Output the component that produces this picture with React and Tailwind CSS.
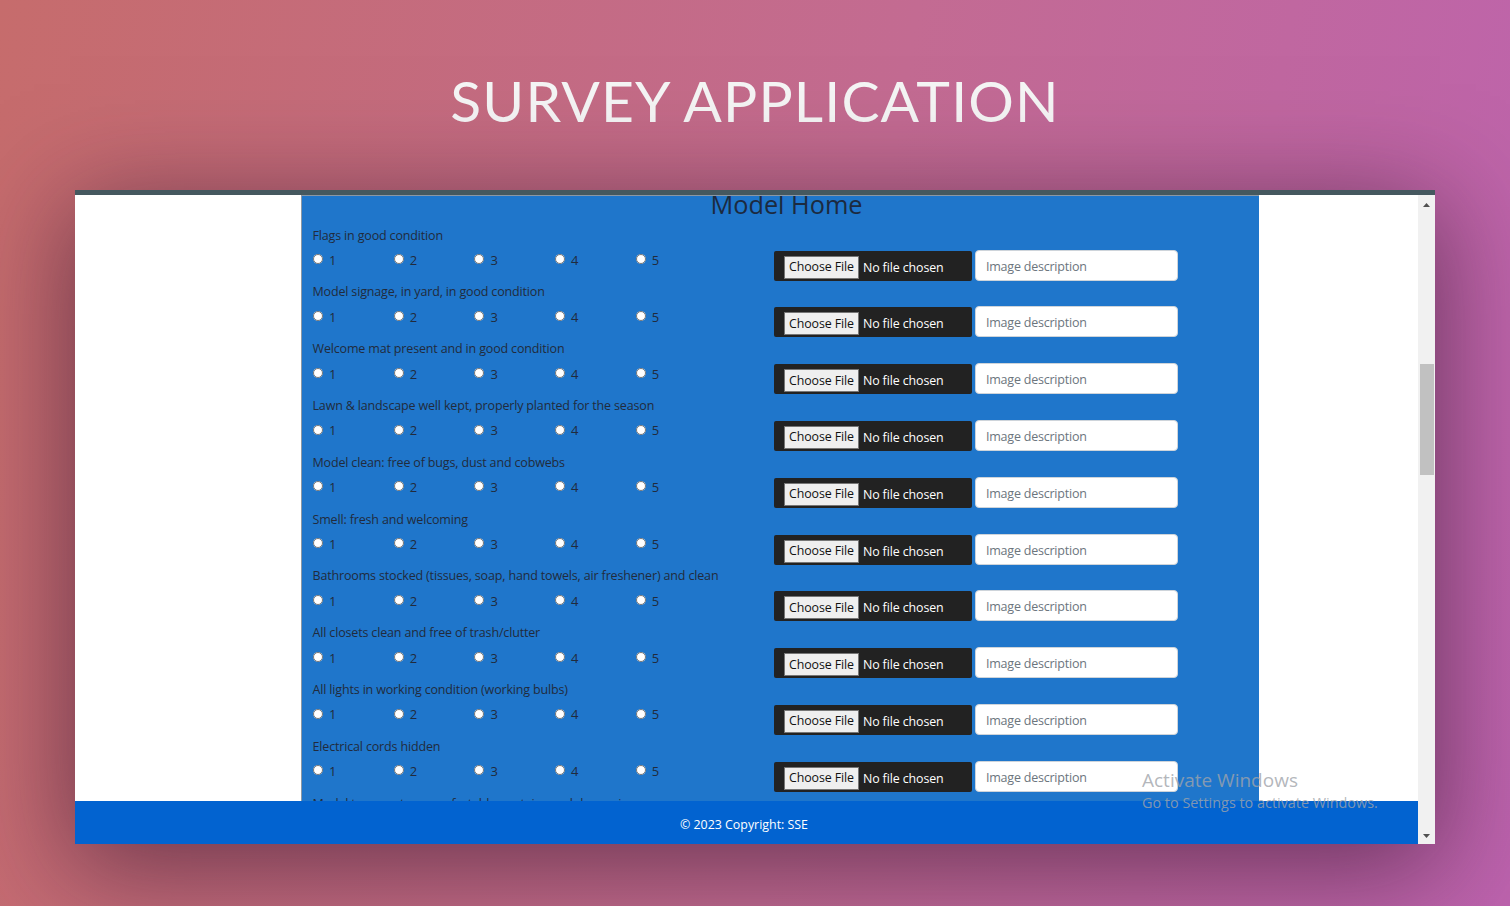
import React from "react";

const questions = [
  "Flags in good condition",
  "Model signage, in yard, in good condition",
  "Welcome mat present and in good condition",
  "Lawn & landscape well kept, properly planted for the season",
  "Model clean: free of bugs, dust and cobwebs",
  "Smell: fresh and welcoming",
  "Bathrooms stocked (tissues, soap, hand towels, air freshener) and clean",
  "All closets clean and free of trash/clutter",
  "All lights in working condition (working bulbs)",
  "Electrical cords hidden",
  "Model temperature comfortable, curtains and drapes in",
];

const Question = ({ text, index }) => (
  <div className="h-[56.8px] flex shrink-0">
    <div className="w-[472px] shrink-0 pl-[10.5px]">
      <p className="text-[12.5px] tracking-[-0.16px] leading-[20px] text-[#212b3c]">{text}</p>
      <div className="flex mt-[4.6px]">
        {[1, 2, 3, 4, 5].map((n) => (
          <label key={n} className="w-[80.7px] h-[20px] flex items-center text-[13px] text-[#212b3c]">
            <input type="radio" name={`q${index}`} className="w-[10px] h-[10px] m-0 ml-[0.5px] mr-[6px] -mt-[2px] accent-white" />
            <span className="mt-[1px]">{n}</span>
          </label>
        ))}
      </div>
    </div>
    <div className="flex items-start pt-[24px] gap-[3px]">
      <div className="w-[198px] h-[30px] mt-[1px] bg-[#222222] rounded-[2px] flex items-center pl-[10px] pt-[3px] overflow-hidden">
        <input
          type="file"
          className="w-[185px] text-[12.4px] tracking-[-0.1px] leading-[18px] text-white file:text-[12.4px] file:text-[#111] file:bg-[#efefef] file:border file:border-solid file:border-[#767676] file:px-[4px] file:h-[23px] file:mr-[4px] file:rounded-none"
        />
      </div>
      <input
        type="text"
        placeholder="Image description"
        className="w-[203px] h-[31px] bg-white rounded-[4px] border border-[#ced4da] px-[10px] pt-[2px] text-[12.5px] tracking-[-0.22px] placeholder:text-[#6c757d] outline-none"
      />
    </div>
  </div>
);

const Scrollbar = () => (
  <div className="w-[17px] shrink-0 bg-[#f1f1f1] flex flex-col items-center justify-between relative">
    <svg width="9" height="16" viewBox="0 0 9 16" className="mt-[1px]">
      <path d="M1 11 L4.5 7 L8 11 Z" fill="#505050" />
    </svg>
    <div className="absolute left-[2px] top-[169px] w-[14px] h-[111px] bg-[#c1c1c1]" />
    <svg width="9" height="16" viewBox="0 0 9 16">
      <path d="M1 6 L8 6 L4.5 10 Z" fill="#505050" />
    </svg>
  </div>
);

const App = () => {
  return (
    <div className="w-[1510px] h-[906px] overflow-hidden relative flex flex-col items-center bg-[linear-gradient(100deg,#c66c6c_0%,#c36b92_55%,#bd63ae_100%)] font-['Open_Sans',sans-serif]">

      <h1 className="h-[190px] shrink-0 pt-[65px] text-[57px] leading-[70px] font-normal tracking-[1.15px] text-[#f5f5f5] font-['Lato',sans-serif] whitespace-nowrap">
        SURVEY APPLICATION
      </h1>

      <div className="w-[1360px] h-[654px] shrink-0 bg-white border-t-[5px] border-[#45585f] flex shadow-[0_20px_100px_5px_rgba(50,20,45,0.6)]">

        <div className="flex-1 flex flex-col min-w-0">
          <div className="flex-1 overflow-hidden flex pl-[226px]">
            <div className="w-[958px] h-full bg-[#1f76cb] border-l border-t border-[#8b98a5] overflow-hidden shrink-0">
              <h2 className="h-[24px] text-center text-[25.3px] leading-[14px] text-[#1c2a3f] font-medium pl-[12px] pt-[1px]">
                Model Home
              </h2>
              <div className="pt-[5.6px]">
                {questions.map((q, i) => (
                  <Question key={q} text={q} index={i} />
                ))}
              </div>
            </div>
          </div>
          <div className="h-[43px] shrink-0 bg-[#0263d0] flex items-center justify-center pt-[5px] pr-[5px] text-[12.4px] text-white">
            © 2023 Copyright: SSE
          </div>
        </div>

        <Scrollbar />
      </div>

      <div className="absolute left-[1142px] top-[767px] text-[#a0a4aa]/80 pointer-events-none">
        <div className="text-[19px] leading-[27px]">Activate Windows</div>
        <div className="text-[14.4px] leading-[18px]">Go to Settings to activate Windows.</div>
      </div>

    </div>
  );
};

export default App;
